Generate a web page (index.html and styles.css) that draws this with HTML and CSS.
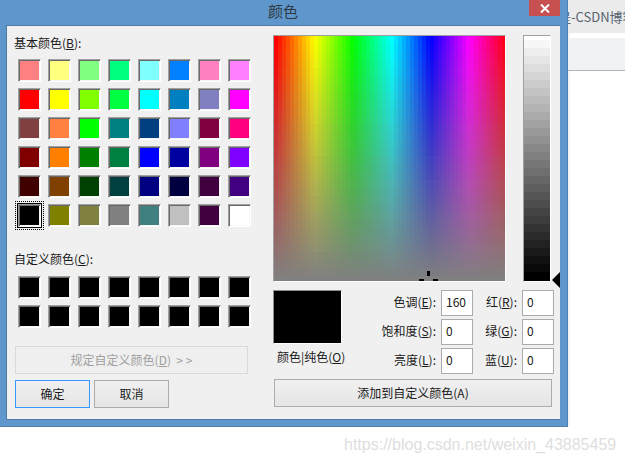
FILE: index.html
```html
<!DOCTYPE html>
<html lang="zh">

<head>
    <meta charset="UTF-8">
    <title>颜色</title>
    <link rel="stylesheet" href="styles.css">
</head>

<body>

    <div class="dialog">
        <div class="titlebar">
            <span class="title">颜色</span>
            <div class="close">
                <svg width="10" height="9" viewBox="0 0 10 9"><path d="M1 0.5 L9 8.5 M9 0.5 L1 8.5" stroke="#fff" stroke-width="2"/></svg>
            </div>
        </div>

        <div class="panel">
            <!-- Left column -->
            <div class="left">
                <div class="label first">基本颜色(<u>B</u>):</div>
                <div class="swatches">
                    <div class="swatch" style="background:#ff8080"></div>
                    <div class="swatch" style="background:#ffff80"></div>
                    <div class="swatch" style="background:#80ff80"></div>
                    <div class="swatch" style="background:#00ff80"></div>
                    <div class="swatch" style="background:#80ffff"></div>
                    <div class="swatch" style="background:#0080ff"></div>
                    <div class="swatch" style="background:#ff80c0"></div>
                    <div class="swatch" style="background:#ff80ff"></div>

                    <div class="swatch" style="background:#ff0000"></div>
                    <div class="swatch" style="background:#ffff00"></div>
                    <div class="swatch" style="background:#80ff00"></div>
                    <div class="swatch" style="background:#00ff40"></div>
                    <div class="swatch" style="background:#00ffff"></div>
                    <div class="swatch" style="background:#0080c0"></div>
                    <div class="swatch" style="background:#8080c0"></div>
                    <div class="swatch" style="background:#ff00ff"></div>

                    <div class="swatch" style="background:#804040"></div>
                    <div class="swatch" style="background:#ff8040"></div>
                    <div class="swatch" style="background:#00ff00"></div>
                    <div class="swatch" style="background:#008080"></div>
                    <div class="swatch" style="background:#004080"></div>
                    <div class="swatch" style="background:#8080ff"></div>
                    <div class="swatch" style="background:#800040"></div>
                    <div class="swatch" style="background:#ff0080"></div>

                    <div class="swatch" style="background:#800000"></div>
                    <div class="swatch" style="background:#ff8000"></div>
                    <div class="swatch" style="background:#008000"></div>
                    <div class="swatch" style="background:#008040"></div>
                    <div class="swatch" style="background:#0000ff"></div>
                    <div class="swatch" style="background:#0000a0"></div>
                    <div class="swatch" style="background:#800080"></div>
                    <div class="swatch" style="background:#8000ff"></div>

                    <div class="swatch" style="background:#400000"></div>
                    <div class="swatch" style="background:#804000"></div>
                    <div class="swatch" style="background:#004000"></div>
                    <div class="swatch" style="background:#004040"></div>
                    <div class="swatch" style="background:#000080"></div>
                    <div class="swatch" style="background:#000040"></div>
                    <div class="swatch" style="background:#400040"></div>
                    <div class="swatch" style="background:#400080"></div>

                    <div class="swatch selected" style="background:#000000"></div>
                    <div class="swatch" style="background:#808000"></div>
                    <div class="swatch" style="background:#808040"></div>
                    <div class="swatch" style="background:#808080"></div>
                    <div class="swatch" style="background:#408080"></div>
                    <div class="swatch" style="background:#c0c0c0"></div>
                    <div class="swatch" style="background:#400040"></div>
                    <div class="swatch" style="background:#ffffff"></div>
                </div>

                <div class="label custom-label">自定义颜色(<u>C</u>):</div>
                <div class="swatches custom">
                    <div class="swatch"></div><div class="swatch"></div><div class="swatch"></div><div class="swatch"></div>
                    <div class="swatch"></div><div class="swatch"></div><div class="swatch"></div><div class="swatch"></div>
                    <div class="swatch"></div><div class="swatch"></div><div class="swatch"></div><div class="swatch"></div>
                    <div class="swatch"></div><div class="swatch"></div><div class="swatch"></div><div class="swatch"></div>
                </div>

                <button class="btn define" disabled>规定自定义颜色(<u>D</u>)&nbsp; &gt; &gt;</button>
                <div class="actions">
                    <button class="btn default">确定</button>
                    <button class="btn">取消</button>
                </div>
            </div>

            <!-- Right column -->
            <div class="right">
                <div class="pickers">
                    <div class="spectrum"><canvas id="spectrum" width="231" height="245"></canvas></div>
                    <div class="lum"><canvas id="lum" width="26" height="245"></canvas></div>
                </div>

                <div class="values">
                    <div class="preview-box">
                        <div class="preview"></div>
                        <div class="label caption">颜色|纯色(<u>O</u>)</div>
                    </div>
                    <div class="fields">
                        <label class="label">色调(<u>E</u>):</label><input type="text" value="160">
                        <label class="label">红(<u>R</u>):</label><input type="text" value="0">
                        <label class="label">饱和度(<u>S</u>):</label><input type="text" value="0">
                        <label class="label">绿(<u>G</u>):</label><input type="text" value="0">
                        <label class="label">亮度(<u>L</u>):</label><input type="text" value="0">
                        <label class="label">蓝(<u>U</u>):</label><input type="text" value="0">
                    </div>
                </div>

                <button class="btn add">添加到自定义颜色(A)</button>
            </div>
        </div>
    </div>

    <div class="behind">
        <div class="tab">是-CSDN博客</div>
        <div class="toolbar"></div>
    </div>

    <div class="watermark">https://blog.csdn.net/weixin_43885459</div>

    <script src="script.js"></script>
</body>

</html>
```

FILE: styles.css
```css
body {
    font-family: "Noto Sans CJK SC", sans-serif;
    font-size: 12px;
    background-color: white;
    margin: 0;
    display: flex;
    align-items: flex-start;
    overflow: hidden;
}

.dialog {
    box-sizing: border-box;
    flex: none;
    width: 568px;
    height: 427px;
    padding: 0 7px 6px 6px;
    background-color: #5f97cc;
    border-right: 1px solid #4f7fae;
    border-bottom: 1px solid #4f7fae;
    box-shadow: 0 1px 3px rgba(0, 0, 0, 0.15);
}

.titlebar {
    position: relative;
    height: 25px;
    line-height: 22px;
    text-align: center;
}

.title {
    font-size: 15px;
    color: #2f3a44;
}

.close {
    position: absolute;
    top: 0;
    right: 0;
    width: 31px;
    height: 16px;
    background-color: #c75050;
    display: flex;
    align-items: center;
    justify-content: center;
}

.panel {
    display: flex;
    padding-top: 9px;
    height: 384px;
    background-color: #f0f0f0;
    border: 1px solid #4a7aa8;
    border-right: none;
}

.left {
    width: 259px;
    padding-left: 7px;
}

.right {
    width: 287px;
}

.label {
    color: #1a1a1a;
    line-height: 14px;
    padding-bottom: 2px;
    white-space: nowrap;
}

.first {
    margin-top: 1px;
}

.swatches {
    display: grid;
    grid-template-columns: repeat(8, 23px);
    column-gap: 7px;
    row-gap: 6px;
    margin: 7px 0 0 4px;
}

.swatch {
    box-sizing: border-box;
    height: 23px;
    background-color: black;
    border: 1px solid;
    border-color: #a0a0a0 #fff #fff #a0a0a0;
    box-shadow: inset 1px 1px #696969, inset -1px -1px #f6f6f6;
}

.selected {
    box-shadow: inset 1px 1px #696969, inset -1px -1px #f6f6f6, 0 0 0 1px black;
    outline: 1px dotted black;
    outline-offset: 2px;
}

.custom-label {
    margin-top: 25px;
}

.custom {
    margin-top: 8px;
}

.btn {
    box-sizing: border-box;
    height: 28px;
    font-family: inherit;
    font-size: 12px;
    color: #1a1a1a;
    border: 1px solid #acacac;
    background: linear-gradient(#f0f0f0, #e5e5e5);
    padding: 0 0 2px;
}

.define {
    display: block;
    width: 233px;
    margin: 18px 0 0 1px;
    color: #a0a0a0;
    border-color: #d9d9d9;
    background: #efefef;
}

.actions {
    display: flex;
    gap: 4px;
    margin: 6px 0 0 1px;
}

.actions .btn {
    width: 75px;
}

.default {
    border-color: #3399ff;
}

.pickers {
    display: flex;
    align-items: flex-start;
}

.spectrum,
.lum {
    position: relative;
    border: 1px solid white;
    border-top-color: #a0a0a0;
    border-left-color: #a0a0a0;
    font-size: 0;
}

.lum {
    margin-left: 17px;
}

/* little arrow that marks the luminosity */
.lum::after {
    content: "";
    position: absolute;
    left: 28px;
    bottom: -7px;
    border: 8px solid transparent;
    border-left: none;
    border-right-color: black;
}

.values {
    display: flex;
    margin-top: 8px;
}

.preview-box {
    width: 69px;
}

.preview {
    box-sizing: border-box;
    height: 54px;
    background-color: black;
    border: 1px solid white;
    border-top-color: #8c8c8c;
    border-left-color: #8c8c8c;
}

.caption {
    margin-top: 6px;
    padding-left: 4px;
}

.fields {
    display: grid;
    grid-template-columns: 94px 32px 39px 32px;
    grid-auto-rows: 26px;
    column-gap: 5px;
    row-gap: 3px;
    align-items: center;
}

.fields .label {
    text-align: right;
}

.fields input {
    box-sizing: border-box;
    width: 32px;
    height: 26px;
    border: 1px solid #ababab;
    background: white;
    font-family: inherit;
    font-size: 12px;
    color: #1a1a1a;
    padding: 0 0 4px 4px;
    margin: 0;
}

.add {
    display: block;
    width: 278px;
    margin: 5px 0 0 1px;
}

.behind {
    flex: 1;
    min-width: 0;
    overflow: hidden;
}

.tab {
    height: 33px;
    line-height: 33px;
    margin-bottom: 5px;
    background-color: #ebebeb;
    color: #566270;
    font-size: 13px;
    white-space: nowrap;
    text-indent: -10px;
}

.toolbar {
    height: 32px;
    background-color: #eff3f5;
    border-bottom: 1px solid #b5b5b5;
}

.watermark {
    position: absolute;
    left: 344px;
    top: 436px;
    font-family: "Liberation Sans", sans-serif;
    font-size: 16px;
    line-height: 18px;
    color: #dedede;
    white-space: nowrap;
}
```

FILE: script.js
```js
// hue across, saturation down, in the blocks the old color dialog uses
const spectrum = document.getElementById("spectrum").getContext("2d");
const BLOCK_W = 4;
const BLOCK_H = 8;

for (let x = 0; x < 231; x += BLOCK_W) {
    for (let y = 0; y < 245; y += BLOCK_H) {
        const hue = (x / 232) * 360;
        const sat = 100 - (y / 240) * 100;
        spectrum.fillStyle = "hsl(" + hue + "," + Math.max(sat, 0) + "%,50%)";
        spectrum.fillRect(x, y, BLOCK_W, BLOCK_H);
    }
}

// crosshair, cut off by the bottom edge
spectrum.fillStyle = "black";
spectrum.fillRect(153, 235, 3, 5);
spectrum.fillRect(145, 243, 5, 2);
spectrum.fillRect(159, 243, 5, 2);

const lum = document.getElementById("lum").getContext("2d");
for (let i = 0; i < 32; i++) {
    const v = Math.max(Math.round(255 - i * 8.5), 0);
    lum.fillStyle = "rgb(" + v + "," + v + "," + v + ")";
    lum.fillRect(0, i * 8 - 4, 26, 8);
}
```
